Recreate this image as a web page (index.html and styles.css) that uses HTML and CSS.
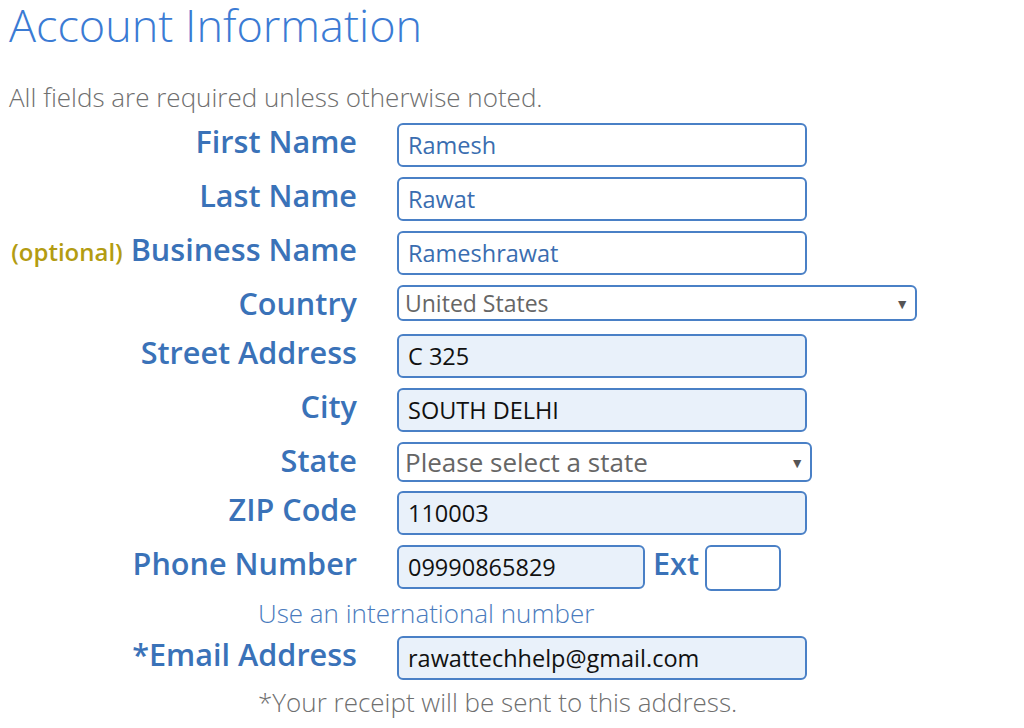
FILE: index.html
```
<!DOCTYPE html>
<html lang="en">
<head>
    <meta charset="UTF-8">
    <meta name="viewport" content="width=device-width, initial-scale=1.0">
    <title>Account Information</title>
    <link rel="stylesheet" href="styles.css">
</head>
<body>
    <div class="page">
        <h1>Account Information</h1>
        <p class="note">All fields are required unless otherwise noted.</p>

        <form class="form">
            <div class="row">
                <label for="first">First Name</label>
                <input id="first" class="input" type="text" value="Ramesh">
            </div>
            <div class="row">
                <label for="last">Last Name</label>
                <input id="last" class="input" type="text" value="Rawat">
            </div>
            <div class="row">
                <label for="business"><span class="optional">(optional)</span> Business Name</label>
                <input id="business" class="input" type="text" value="Rameshrawat">
            </div>
            <div class="row row-select">
                <label for="country">Country</label>
                <div class="select select-country">
                    <span>United States</span>
                    <span class="arrow">&#9660;</span>
                </div>
            </div>
            <div class="row">
                <label for="street">Street Address</label>
                <input id="street" class="input filled" type="text" value="C 325">
            </div>
            <div class="row">
                <label for="city">City</label>
                <input id="city" class="input filled" type="text" value="SOUTH DELHI">
            </div>
            <div class="row row-state">
                <label for="state">State</label>
                <div class="select select-state">
                    <span>Please select a state</span>
                    <span class="arrow">&#9660;</span>
                </div>
            </div>
            <div class="row">
                <label for="zip">ZIP Code</label>
                <input id="zip" class="input filled" type="text" value="110003">
            </div>
            <div class="row row-phone">
                <label for="phone">Phone Number</label>
                <div class="phone">
                    <input id="phone" class="input filled phone-input" type="text" value="09990865829">
                    <span class="ext-label">Ext</span>
                    <input class="input ext-input" type="text" value="">
                </div>
            </div>
            <p class="help help-blue">Use an international number</p>
            <div class="row row-email">
                <label for="email">*Email Address</label>
                <input id="email" class="input filled" type="text" value="rawattechhelp@gmail.com">
            </div>
            <p class="help">*Your receipt will be sent to this address.</p>
        </form>
    </div>
</body>
</html>
```

FILE: styles.css
```
body {
    margin: 0;
    font-family: 'Open Sans', 'Noto Sans', sans-serif;
    background: #fff;
}
.page {
    padding: 0;
}
h1 {
    margin: 0 0 0 9px;
    font-size: 45px;
    font-weight: 300;
    line-height: 50px;
    color: #3b7bd4;
}
.note {
    margin: 32px 0 11px 9px;
    font-size: 26px;
    font-weight: 300;
    line-height: 30px;
    color: #6f6f6f;
}
.row {
    display: flex;
    align-items: flex-start;
    margin-bottom: 10px;
}
.row label {
    flex: 0 0 357px;
    margin-right: 40px;
    text-align: right;
    white-space: nowrap;
    font-size: 30.6px;
    font-weight: 600;
    line-height: 36px;
    color: #3a72b8;
}
.optional {
    font-size: 24px;
    color: #b39c12;
}
.input {
    box-sizing: border-box;
    width: 410px;
    height: 44px;
    padding: 0 9px;
    font-family: inherit;
    font-size: 23.5px;
    color: #3a6db0;
    background: #fff;
    border: 2px solid #4a80c6;
    border-radius: 6px;
    outline: none;
}
.input.filled {
    color: #111;
    background: #e9f1fa;
}
.select {
    box-sizing: border-box;
    display: flex;
    align-items: center;
    justify-content: space-between;
    padding: 0 6px 0 6px;
    color: #666;
    background: #fff;
    border: 2px solid #4a80c6;
    border-radius: 6px;
}
.select-country {
    width: 520px;
    height: 36px;
    font-size: 23px;
}
.select-state {
    width: 415px;
    height: 40px;
    font-size: 26px;
}
.arrow {
    font-size: 14px;
    color: #555;
}
.row-select {
    margin-bottom: 13px;
}
.row-state {
    margin-bottom: 9px;
}
.row-phone {
    margin-bottom: 6px;
}
.phone {
    display: flex;
    align-items: flex-start;
}
.phone-input {
    width: 248px;
}
.ext-label {
    margin: 0 6px 0 8px;
    font-size: 30.6px;
    font-weight: 600;
    line-height: 36px;
    color: #3a72b8;
}
.ext-input {
    width: 76px;
    height: 46px;
}
.help {
    margin: 0 0 0 258px;
    font-size: 26px;
    font-weight: 300;
    line-height: 36px;
    color: #6f6f6f;
}
.help-blue {
    margin-top: 0;
    margin-bottom: 7px;
    line-height: 32px;
    color: #4a7bbd;
}
.row-email {
    margin-bottom: 4px;
}
```
